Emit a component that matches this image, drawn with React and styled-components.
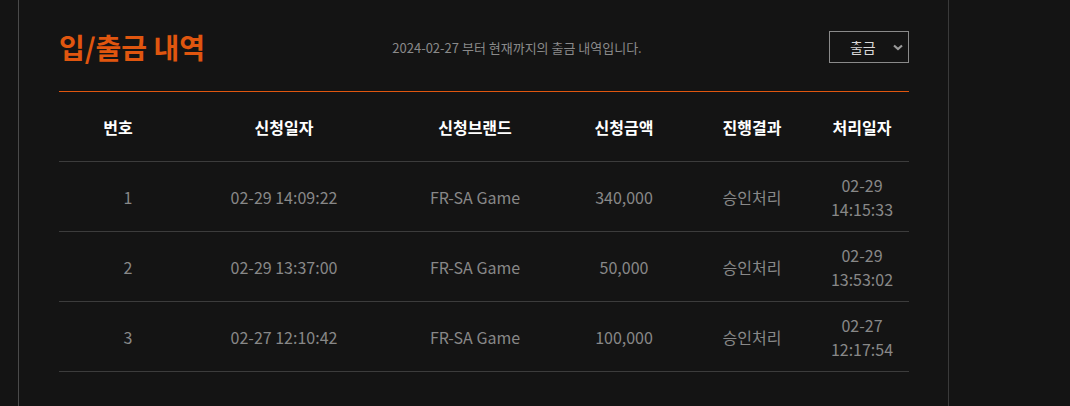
import React from "react";
import styled, { createGlobalStyle } from "styled-components";

const GlobalStyle = createGlobalStyle`
  html, body {
    margin: 0;
    padding: 0;
    background: #141414;
    font-family: "Noto Sans CJK KR", "Noto Sans", sans-serif;
  }
`;

const Page = styled.div`
  min-height: 406px;
  background: #141414;
  display: flex;
`;

const Panel = styled.div`
  margin-left: 18px;
  width: 850px;
  padding: 0 39px 0 40px;
  border-left: 1px solid #4a4a4a;
  border-right: 1px solid #3a3a3a;
  min-height: 406px;
`;

const Header = styled.div`
  display: flex;
  align-items: center;
  justify-content: space-between;
  height: 40px;
  padding-top: 27px;
  margin-bottom: 24px;
`;

const Title = styled.h2`
  margin: 0;
  font-size: 28px;
  font-weight: 700;
  color: #e0560f;
`;

const Notice = styled.p`
  margin: 0;
  font-size: 13px;
  color: #8a8a8a;
`;

const Select = styled.div`
  box-sizing: border-box;
  width: 80px;
  height: 32px;
  border: 1px solid #8a8a8a;
  display: flex;
  align-items: center;
  justify-content: space-between;
  padding: 0 5px 0 20px;
  color: #d8d8d8;
  font-size: 14px;
`;

const Table = styled.table`
  width: 100%;
  border-collapse: collapse;
  border-top: 1px solid #e0560f;
  table-layout: fixed;
`;

const Th = styled.th`
  height: 69px;
  font-size: 16px;
  font-weight: 700;
  color: #ffffff;
  text-align: center;
  border-bottom: 1px solid #3c3c3c;
  padding: 0;
`;

const Td = styled.td`
  height: 69px;
  font-size: 16px;
  line-height: 24px;
  color: #888888;
  text-align: center;
  border-bottom: 1px solid #3c3c3c;
  padding: 0 0 0 ${(p) => (p.$indent ? "20px" : "0")};
`;

const columns = [
  { label: "번호", width: 118 },
  { label: "신청일자", width: 214 },
  { label: "신청브랜드", width: 168 },
  { label: "신청금액", width: 130 },
  { label: "진행결과", width: 126 },
  { label: "처리일자", width: 94 },
];

const rows = [
  { no: 1, date: "02-29 14:09:22", brand: "FR-SA Game", amount: "340,000", status: "승인처리", done: ["02-29", "14:15:33"] },
  { no: 2, date: "02-29 13:37:00", brand: "FR-SA Game", amount: "50,000", status: "승인처리", done: ["02-29", "13:53:02"] },
  { no: 3, date: "02-27 12:10:42", brand: "FR-SA Game", amount: "100,000", status: "승인처리", done: ["02-27", "12:17:54"] },
];

const Chevron = () => (
  <svg width="10" height="7" viewBox="0 0 10 7">
    <path d="M1 1.5 L5 5 L9 1.5" fill="none" stroke="#9a9a9a" strokeWidth="2.2" />
  </svg>
);

export default function App() {
  return (
    <Page>
      <GlobalStyle />
      <Panel>
        <Header>
          <Title>입/출금 내역</Title>
          <Notice>2024-02-27 부터 현재까지의 출금 내역입니다.</Notice>
          <Select>
            <span>출금</span>
            <Chevron />
          </Select>
        </Header>
        <Table>
          <colgroup>
            {columns.map((c) => (
              <col key={c.label} style={{ width: c.width }} />
            ))}
          </colgroup>
          <thead>
            <tr>
              {columns.map((c) => (
                <Th key={c.label}>{c.label}</Th>
              ))}
            </tr>
          </thead>
          <tbody>
            {rows.map((r) => (
              <tr key={r.no}>
                <Td $indent>{r.no}</Td>
                <Td>{r.date}</Td>
                <Td>{r.brand}</Td>
                <Td>{r.amount}</Td>
                <Td>{r.status}</Td>
                <Td>
                  {r.done[0]}
                  <br />
                  {r.done[1]}
                </Td>
              </tr>
            ))}
          </tbody>
        </Table>
      </Panel>
    </Page>
  );
}
